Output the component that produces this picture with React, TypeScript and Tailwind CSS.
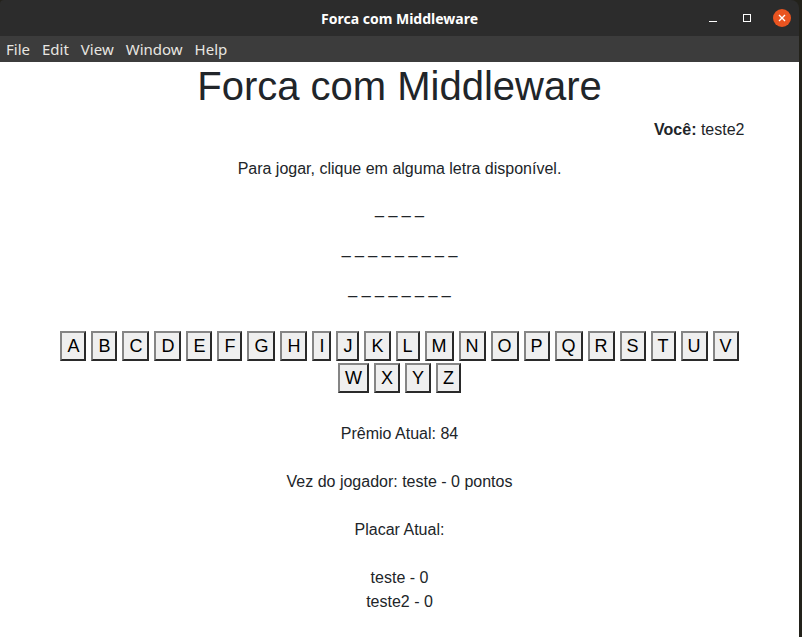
import React from 'react';

const letters = 'ABCDEFGHIJKLMNOPQRSTUVWXYZ'.split('');
const words = ['_ _ _ _', '_ _ _ _ _ _ _ _ _', '_ _ _ _ _ _ _ _'];
const menu = ['File', 'Edit', 'View', 'Window', 'Help'];

export default function App() {
  return (
    <div className="w-[802px] h-[637px] bg-[#23221b] overflow-hidden">
      <div className="w-[799px] h-full flex flex-col rounded-tr-[8px] rounded-tl-[4px] overflow-hidden">
        {/* title bar */}
        <div className="h-[36px] bg-[#2c2c2c] flex items-center relative shrink-0">
          <div className="flex-1 text-center text-white font-bold text-[14px] font-['Noto_Sans',sans-serif]">
            Forca com Middleware
          </div>
          <div className="absolute right-0 top-0 h-full flex items-center">
            <div className="w-[35px] h-full flex items-center justify-center">
              <div className="w-[8px] h-[1px] bg-white mt-[6px] ml-[3px]" />
            </div>
            <div className="w-[35px] h-full flex items-center justify-center">
              <div className="w-[8px] h-[8px] border border-white" />
            </div>
            <div className="w-[35px] h-full flex items-center justify-center">
              <div className="w-[18px] h-[18px] rounded-full bg-[#e95420] flex items-center justify-center">
                <svg width="8" height="8" viewBox="0 0 8 8">
                  <path d="M1 1 L7 7 M7 1 L1 7" stroke="white" strokeWidth="1.4" />
                </svg>
              </div>
            </div>
          </div>
        </div>
        {/* menu bar */}
        <div className="h-[26px] bg-[#3c3c3c] flex items-center gap-[12px] px-[6px] text-[15px] text-[#e8e6e1] font-['Noto_Sans',sans-serif] shrink-0">
          {menu.map(m => (
            <span key={m}>{m}</span>
          ))}
        </div>
        {/* page */}
        <div className="flex-1 bg-white font-['Liberation_Sans',Arial,sans-serif] text-[#212529] text-[16px] leading-[24px]">
          <div className="w-[720px] mx-auto px-[15px] text-center">
            <h1 className="text-[40px] leading-[48px] mb-[8px]">Forca com Middleware</h1>
            <p className="text-right mb-[15px]">
              <b>Você:</b> teste2
            </p>
            <p className="mb-[16px]">Para jogar, clique em alguma letra disponível.</p>
            {words.map((w, i) => (
              <p key={i} className="mb-[16px] whitespace-pre">{w}</p>
            ))}
            <div className="mt-[30px] flex flex-wrap justify-center gap-x-[5px] gap-y-[2px]">
              {letters.map(l => (
                <button
                  key={l}
                  type="button"
                  className="h-[30px] px-[5px] text-[18px] leading-[22px] bg-[#efefef] text-black border-2 border-t-[#858585] border-l-[#858585] border-b-[#2a2a2a] border-r-[#2a2a2a]"
                >
                  {l}
                </button>
              ))}
            </div>
            <div className="mt-[29px]">
              <p className="mb-[24px]">Prêmio Atual: 84</p>
              <p className="mb-[24px]">Vez do jogador: teste - 0 pontos</p>
              <p className="mb-[24px]">Placar Atual:</p>
              <p>teste - 0</p>
              <p>teste2 - 0</p>
            </div>
          </div>
        </div>
      </div>
    </div>
  );
}
